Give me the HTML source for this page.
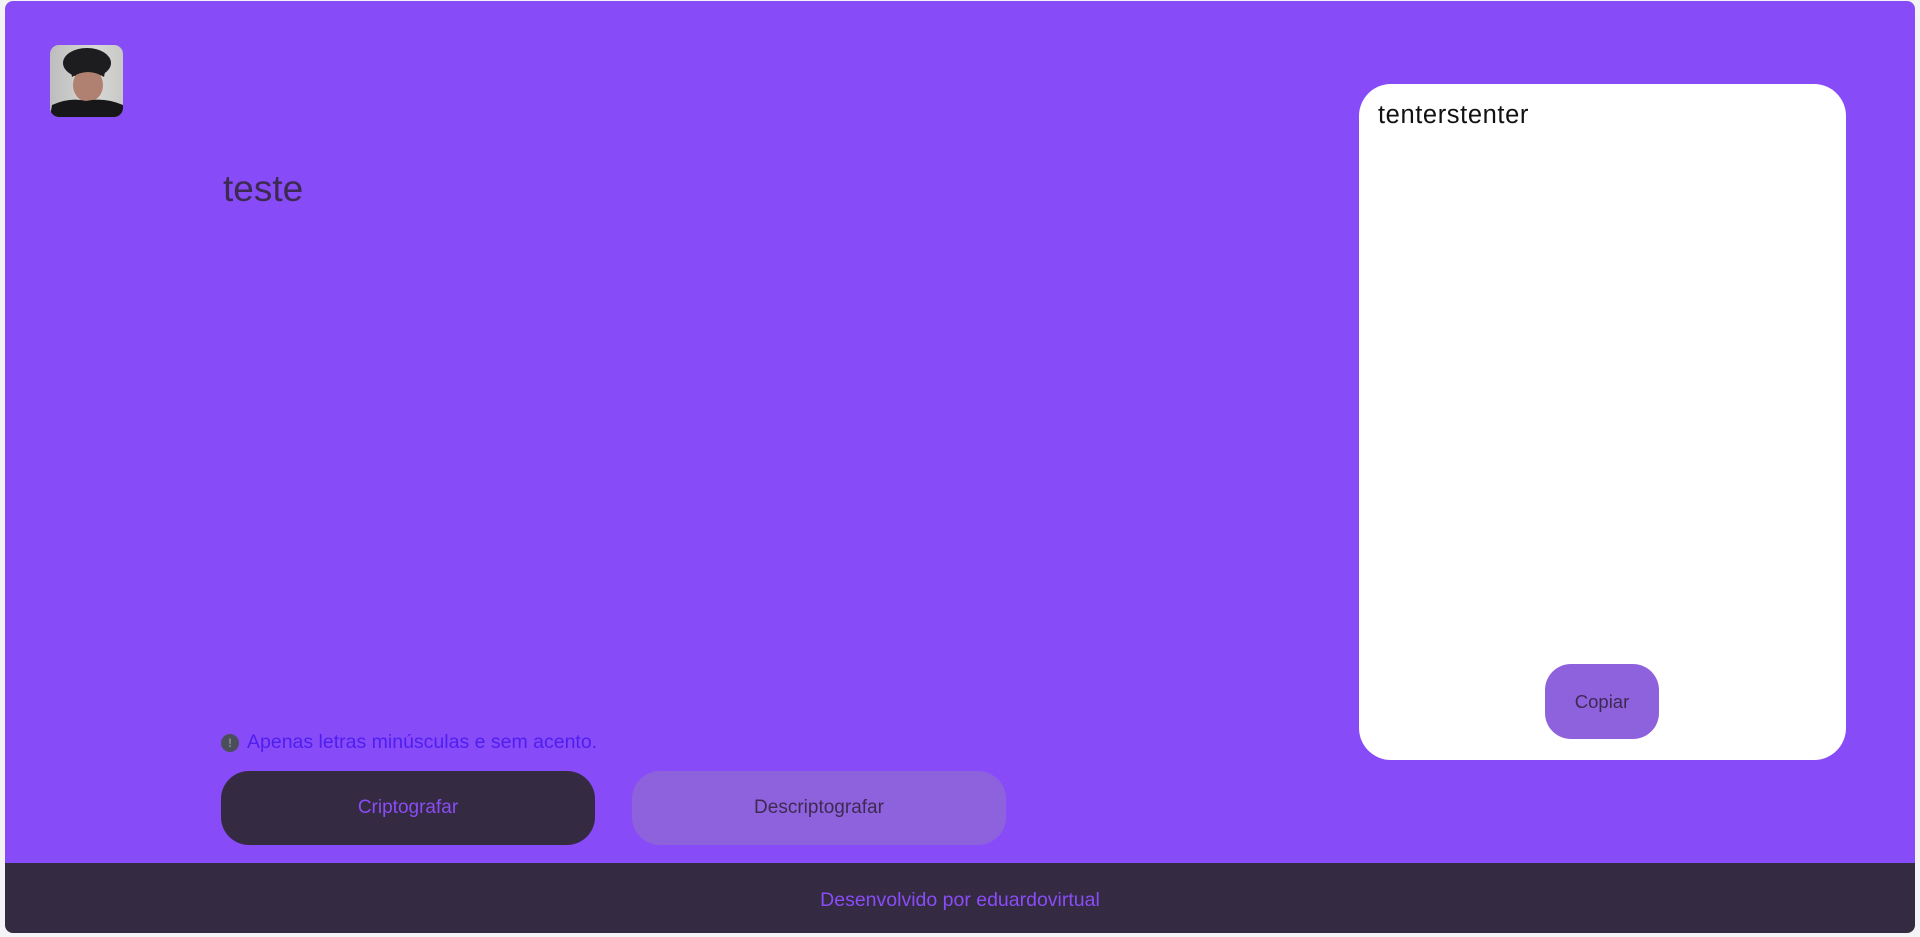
<!DOCTYPE html>
<html><head><meta charset="utf-8"><style>
*{margin:0;padding:0;box-sizing:border-box}
html,body{width:1920px;height:935px;overflow:hidden;background:#f4f4f6;font-family:"Liberation Sans",sans-serif}
.main{position:absolute;left:5px;top:1px;width:1910px;height:862px;background:#884bf8;border-radius:8px 8px 0 0}
.foot{position:absolute;left:5px;top:863px;width:1910px;height:70px;background:#342a42;border-radius:0 0 8px 8px;color:#8a4cf6;font-size:19.5px;text-align:center;line-height:74px}
.av{position:absolute;left:45px;top:44px;width:73px;height:72px;border-radius:9px;overflow:hidden;background:linear-gradient(90deg,#bdbdbd,#d8d8d6 60%,#c8c8c6)}
.t{position:absolute;left:218px;top:167px;font-size:37px;color:#3d2a52}
.warn{position:absolute;left:216px;top:730px;font-size:19.5px;color:#4f1ff0;display:flex;align-items:center;gap:8px}
.ic{width:18px;height:18px;border-radius:50%;background:#4b4f5b;color:#8a8a95;font-size:12px;font-weight:bold;text-align:center;line-height:18px}
.b{position:absolute;top:770px;width:374px;height:74px;border-radius:28px;font-size:19px;text-align:center;line-height:74px}
.b1{left:216px;background:#342a42;color:#8a4cf6}
.b2{left:627px;background:#8f62dd;color:#3d2a52}
.card{position:absolute;left:1354px;top:83px;width:487px;height:676px;background:#fff;border-radius:32px}
.ct{position:absolute;left:19px;top:17px;font-size:25.5px;color:#111;letter-spacing:0.6px}
.cp{position:absolute;left:186px;top:580px;width:114px;height:75px;border-radius:26px;background:#8f62dd;color:#3d2a52;font-size:18.5px;text-align:center;line-height:75px}
</style></head><body>
<div class="main">
<div class="av"><svg width="73" height="72" viewBox="0 0 73 72"><ellipse cx="37" cy="18" rx="24" ry="15" fill="#1d1d20"/><ellipse cx="38" cy="40" rx="15" ry="17" fill="#b08070"/><path d="M20 22 Q37 8 56 22 L54 32 Q38 22 22 32Z" fill="#1d1d20"/><path d="M0 72 L2 60 Q20 52 36 56 Q54 52 73 60 L73 72Z" fill="#17171a"/></svg></div>
<div class="t">teste</div>
<div class="warn"><div class="ic">!</div>Apenas letras minúsculas e sem acento.</div>
<div class="b b1">Criptografar</div>
<div class="b b2">Descriptografar</div>
<div class="card"><div class="ct">tenterstenter</div><div class="cp">Copiar</div></div>
</div>
<div class="foot">Desenvolvido por eduardovirtual</div>
</body></html>
